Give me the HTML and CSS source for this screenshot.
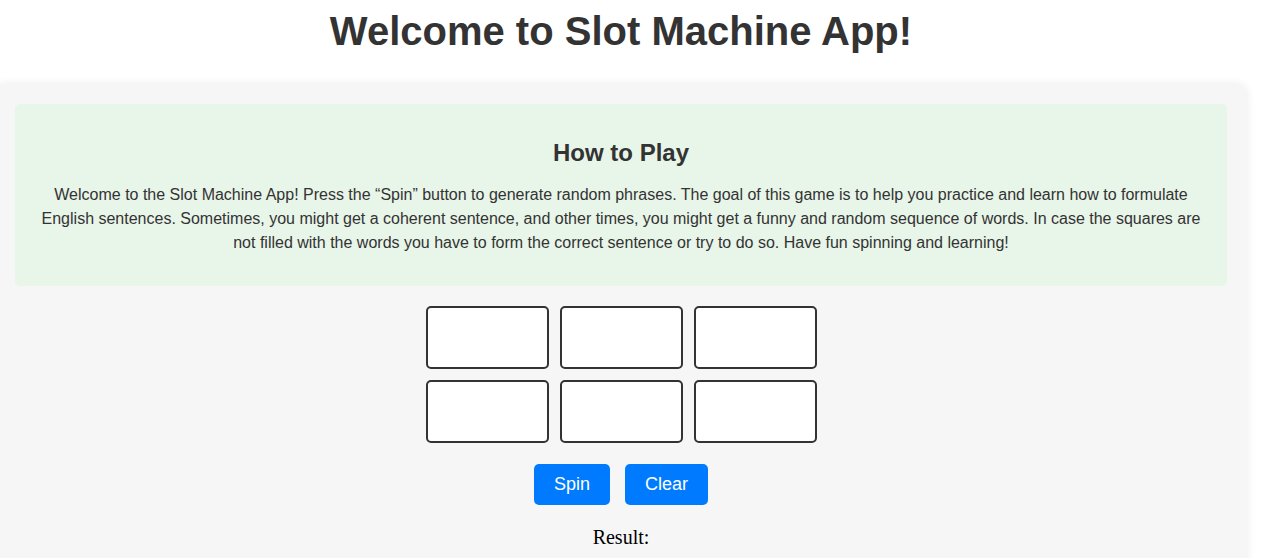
FILE: index.html
```html
<!DOCTYPE html>
<html lang="en">
<head>
<meta charset="utf-8">
<title>Slot Machine App</title>
<link rel="stylesheet" href="styles.css">
</head>
<body>
<div class="page">
  <h1 class="title">Welcome to Slot Machine App!</h1>
  <div class="app">
    <section class="howto">
      <h2 class="howto-title">How to Play</h2>
      <p class="howto-text">Welcome to the Slot Machine App! Press the “Spin” button to generate random phrases. The goal of this game is to help you practice and learn how to formulate English sentences. Sometimes, you might get a coherent sentence, and other times, you might get a funny and random sequence of words. In case the squares are not filled with the words you have to form the correct sentence or try to do so. Have fun spinning and learning!</p>
    </section>
    <div class="slots">
      <div class="slot"></div>
      <div class="slot"></div>
      <div class="slot"></div>
      <div class="slot"></div>
      <div class="slot"></div>
      <div class="slot"></div>
    </div>
    <div class="controls">
      <button class="btn">Spin</button>
      <button class="btn">Clear</button>
    </div>
    <div class="result">Result:</div>
  </div>
</div>
</body>
</html>
```
FILE: styles.css
```css
html, body {
  margin: 0;
  padding: 0;
  background: #ffffff;
}
body {
  font-family: "Liberation Sans", Arial, sans-serif;
  color: #333333;
}
.page {
  width: 1242px;
}
.title {
  margin: 8px 0 30px;
  font-size: 40px;
  font-weight: bold;
  line-height: 46px;
  text-align: center;
  color: #333333;
}
.app {
  margin: 0 -5px;
  padding: 20px;
  background: #f6f6f6;
  border-radius: 10px;
  box-shadow: 0 0 10px rgba(0, 0, 0, 0.08);
  min-height: 600px;
}
.howto {
  background: #e8f5e9;
  border-radius: 5px;
  padding: 15px 20px 15px;
  text-align: center;
}
.howto-title {
  margin: 20px 0 17px;
  font-size: 24px;
  line-height: 27px;
  font-weight: bold;
  color: #333333;
}
.howto-text {
  margin: 0 0 16px;
  font-size: 16px;
  line-height: 24px;
  color: #333333;
}
.slots {
  margin: 20px auto 0;
  width: 391px;
  display: grid;
  grid-template-columns: repeat(3, 123px);
  grid-auto-rows: 63px;
  gap: 11px;
}
.slot {
  box-sizing: border-box;
  background: #ffffff;
  border: 2px solid #333333;
  border-radius: 5px;
}
.controls {
  margin-top: 21px;
  display: flex;
  justify-content: center;
  gap: 15px;
}
.btn {
  font-family: "Liberation Sans", Arial, sans-serif;
  font-size: 18px;
  line-height: 21px;
  padding: 10px 20px;
  color: #ffffff;
  background: #007bff;
  border: none;
  border-radius: 5px;
}
.result {
  margin-top: 21px;
  text-align: center;
  font-family: "Liberation Serif", "Times New Roman", serif;
  font-size: 20px;
  line-height: 23px;
  color: #000000;
}
```
